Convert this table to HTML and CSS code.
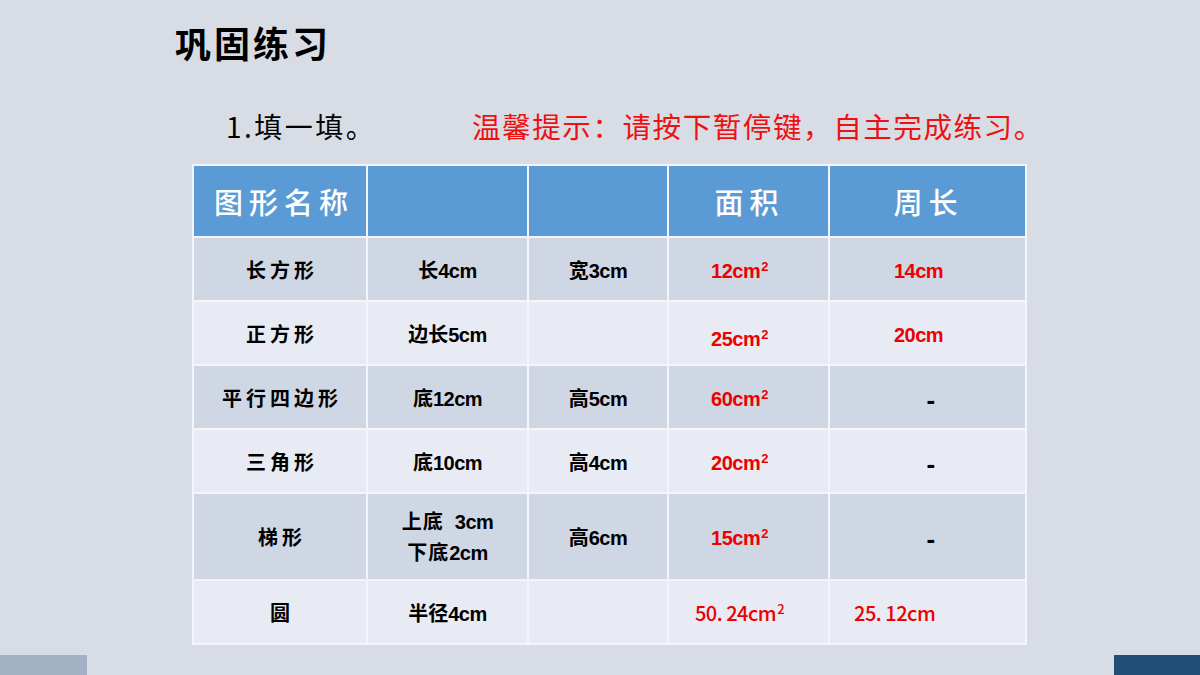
FILE: index.html
```html
<!DOCTYPE html>
<html lang="zh-CN">
<head>
<meta charset="utf-8">
<link rel="stylesheet" href="styles.css">
</head>
<body>
<div class="page">
  <h1 class="title">巩固练习</h1>
  <div class="sub">
    <span class="task">1.填一填。</span>
    <span class="tip">温馨提示：请按下暂停键，自主完成练习。</span>
  </div>
  <table class="grid">
    <colgroup>
      <col class="c1"><col class="c2"><col class="c3"><col class="c4"><col class="c5">
    </colgroup>
    <thead>
      <tr>
        <th class="h-name">图形名称</th>
        <th></th>
        <th></th>
        <th class="h-c">面积</th>
        <th class="h-c">周长</th>
      </tr>
    </thead>
    <tbody>
      <tr class="dark">
        <td class="nm">长方形</td>
        <td>长<span class="n">4cm</span></td>
        <td>宽<span class="n">3cm</span></td>
        <td class="red"><span class="n">12cm<span class="sq">2</span></span></td>
        <td class="red"><span class="n">14cm</span></td>
      </tr>
      <tr class="light">
        <td class="nm">正方形</td>
        <td>边长<span class="n">5cm</span></td>
        <td></td>
        <td class="red low"><span class="n">25cm<span class="sq">2</span></span></td>
        <td class="red"><span class="n">20cm</span></td>
      </tr>
      <tr class="dark">
        <td class="nm">平行四边形</td>
        <td>底<span class="n">12cm</span></td>
        <td>高<span class="n">5cm</span></td>
        <td class="red"><span class="n">60cm<span class="sq">2</span></span></td>
        <td class="dash"><span class="n">-</span></td>
      </tr>
      <tr class="light">
        <td class="nm">三角形</td>
        <td>底<span class="n">10cm</span></td>
        <td>高<span class="n">4cm</span></td>
        <td class="red"><span class="n">20cm<span class="sq">2</span></span></td>
        <td class="dash"><span class="n">-</span></td>
      </tr>
      <tr class="dark tall">
        <td class="nm">梯形</td>
        <td class="two">上底&nbsp; <span class="n">3cm</span><br>下底<span class="n">2cm</span></td>
        <td>高<span class="n">6cm</span></td>
        <td class="red"><span class="n">15cm<span class="sq">2</span></span></td>
        <td class="dash"><span class="n">-</span></td>
      </tr>
      <tr class="light">
        <td class="nm">圆</td>
        <td>半径<span class="n">4cm</span></td>
        <td></td>
        <td class="red"><span class="hei">50. 24cm<span class="sq">2</span></span></td>
        <td class="red left"><span class="hei">25. 12cm</span></td>
      </tr>
    </tbody>
  </table>
  <div class="footer">
    <div class="bar bar-l"></div>
    <div class="bar bar-r"></div>
  </div>
</div>
</body>
</html>
```

FILE: styles.css
```css
* { box-sizing: border-box; }
html, body { margin: 0; padding: 0; }
body {
  background: #d8dde5;
  font-family: "Noto Sans CJK SC", "Liberation Sans", sans-serif;
  color: #000;
}
.page {
  width: 1200px;
  height: 675px;
  display: flex;
  flex-direction: column;
  overflow: hidden;
}
.title {
  margin: 18px 0 0 175px;
  font-size: 36px;
  line-height: 48px;
  font-weight: 700;
  letter-spacing: 3px;
}
.sub {
  margin: 40px 0 0 226px;
  display: flex;
  align-items: center;
  height: 40px;
  font-size: 28px;
  line-height: 40px;
}
.task {
  width: 246px;
  font-family: "Noto Sans CJK SC", sans-serif;
  letter-spacing: 2.5px;
}
.tip { color: #ee1111; font-size: 28.6px; letter-spacing: 1.5px; }

.grid {
  margin: 18px 0 0 192px;
  width: 833px;
  border-collapse: collapse;
  table-layout: fixed;
}
.c1 { width: 174px; }
.c2 { width: 161px; }
.c3 { width: 140px; }
.c4 { width: 161px; }
.c5 { width: 197px; }
.grid th, .grid td {
  border: 2px solid #f3f5fa;
  padding: 0;
  text-align: center;
  vertical-align: middle;
}
.grid thead th {
  background: #5b9bd5;
  color: #fff;
  height: 72px;
  font-size: 29px;
  font-weight: 500;
  letter-spacing: 6px;
}
.grid th.h-name { text-align: left; padding-left: 20px; }
.grid th.h-c { padding-left: 2px; }
.grid td {
  height: 64px;
  font-size: 20px;
  font-weight: 700;
}
.grid tr.tall td { height: 87px; }
.grid tr.dark td { background: #cfd7e5; }
.grid tr.light td { background: #e8ebf3; }
.grid td.nm { letter-spacing: 4px; padding-left: 4px; }
.n {
  font-family: "Liberation Sans", sans-serif;
  font-weight: 700;
  letter-spacing: -0.5px;
}
.sq {
  font-size: 13px;
  vertical-align: 7px;
  line-height: 0;
  margin-left: 1px;
}
.grid td.two { line-height: 29px; letter-spacing: 1px; }
.grid td.red { color: #ee0000; padding-right: 18px; }
.grid td.red.low { padding-top: 8px; }
.grid td.dash { padding-left: 6px; font-size: 26px; }
.grid td.left { text-align: left; padding-left: 24px; padding-right: 0; }
.hei {
  font-family: "Noto Sans CJK SC", sans-serif;
  font-weight: 500;
  letter-spacing: -0.5px;
}
.footer {
  margin-top: auto;
  display: flex;
  justify-content: space-between;
  height: 20px;
}
.bar { width: 87px; height: 20px; }
.bar-l { background: #a2b1c4; }
.bar-r { width: 86px; background: #1f4e79; }
```
